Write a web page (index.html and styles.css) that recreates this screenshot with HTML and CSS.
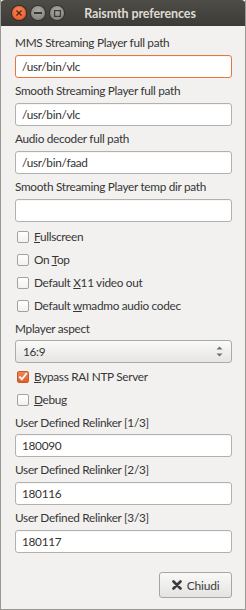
FILE: index.html
```html
<!DOCTYPE html>
<html lang="en">
<head>
  <meta charset="UTF-8">
  <title>Raismth preferences</title>
  <link rel="stylesheet" href="styles.css">
</head>
<body>
  <div class="window">
    <!-- Title bar -->
    <div class="titlebar">
      <div class="wm-buttons">
        <span class="wm-btn wm-close">
          <svg width="6" height="6" viewBox="0 0 6 6"><path d="M0.5 0.5 L5.5 5.5 M5.5 0.5 L0.5 5.5" stroke="#5a1e0a" stroke-width="1.3"/></svg>
        </span>
        <span class="wm-btn wm-min">
          <svg width="8" height="2" viewBox="0 0 8 2"><rect width="8" height="2" fill="#3a3935"/></svg>
        </span>
        <span class="wm-btn wm-max">
          <svg width="7" height="7" viewBox="0 0 7 7"><rect x="0.6" y="0.6" width="5.8" height="5.8" fill="none" stroke="#3a3935" stroke-width="1.2"/></svg>
        </span>
      </div>
      <div class="title">Raismth preferences</div>
    </div>

    <div class="content">
      <label class="field-label first">MMS Streaming Player full path</label>
      <div class="entry focused">/usr/bin/vlc</div>

      <label class="field-label">Smooth Streaming Player full path</label>
      <div class="entry">/usr/bin/vlc</div>

      <label class="field-label">Audio decoder full path</label>
      <div class="entry">/usr/bin/faad</div>

      <label class="field-label">Smooth Streaming Player temp dir path</label>
      <div class="entry"></div>

      <div class="checks">
        <div class="check"><span class="box"></span><span><u>F</u>ullscreen</span></div>
        <div class="check"><span class="box"></span><span>On <u>T</u>op</span></div>
        <div class="check"><span class="box"></span><span>Default <u>X</u>11 video out</span></div>
        <div class="check"><span class="box"></span><span>Default <u>w</u>madmo audio codec</span></div>
      </div>

      <label class="field-label short">Mplayer aspect</label>
      <div class="combo">
        <span>16:9</span>
        <svg class="spin" width="7" height="11" viewBox="0 0 7 11">
          <path d="M3.5 0.5 L6.5 3.5 L0.5 3.5 Z" fill="#6e6e6e"/>
          <path d="M3.5 10.5 L6.5 7.5 L0.5 7.5 Z" fill="#6e6e6e"/>
        </svg>
      </div>

      <div class="checks second">
        <div class="check"><span class="box checked">
          <svg width="10" height="9" viewBox="0 0 10 9"><path d="M1.2 4.5 L3.9 7.3 L8.8 1" fill="none" stroke="#fff4ec" stroke-width="2"/></svg>
        </span><span><u>B</u>ypass RAI NTP Server</span></div>
        <div class="check"><span class="box"></span><span><u>D</u>ebug</span></div>
      </div>

      <label class="field-label short">User Defined Relinker [1/3]</label>
      <div class="entry">180090</div>

      <label class="field-label">User Defined Relinker [2/3]</label>
      <div class="entry">180116</div>

      <label class="field-label">User Defined Relinker [3/3]</label>
      <div class="entry">180117</div>

      <div class="actions">
        <button class="btn">
          <svg width="10" height="10" viewBox="0 0 10 10"><path d="M1.5 1.5 L8.5 8.5 M8.5 1.5 L1.5 8.5" stroke="#3a3a3a" stroke-width="2.6" stroke-linecap="round"/></svg>
          Chiudi
        </button>
      </div>
    </div>
  </div>
</body>
</html>
```

FILE: styles.css
```css
body {
  margin: 0;
  background-color: #f2f1f0;
  font-family: Lato, "Noto Sans", sans-serif;
  font-size: 11.8px;
  letter-spacing: -0.3px;
  color: #363636;
}

.window {
  width: 246px;
  height: 610px;
  box-sizing: border-box;
  border-left: 1px solid #9a9895;
  border-right: 1px solid #9a9895;
  border-bottom: 1px solid #9a9895;
  background-color: #f2f1f0;
  overflow: hidden;
}

/* Title bar */
.titlebar {
  height: 26px;
  margin: 0 -1px;
  display: flex;
  align-items: center;
  background: linear-gradient(#4d4c47, #3c3b37);
  border-radius: 5px 5px 0 0;
}

.wm-buttons {
  display: flex;
  gap: 5px;
  padding-left: 12px;
}

.wm-btn {
  width: 14px;
  height: 14px;
  border-radius: 50%;
  display: flex;
  align-items: center;
  justify-content: center;
}

.wm-close {
  background: radial-gradient(circle at 50% 35%, #f7875a, #e3501e);
  box-shadow: 0 0 0 1px #3a2a22;
}

.wm-min,
.wm-max {
  background: radial-gradient(circle at 50% 35%, #a9a8a3, #7b7a75);
  box-shadow: 0 0 0 1px #35342f;
}

.title {
  flex: 1;
  text-align: center;
  padding-right: 30px;
  font-weight: bold;
  font-size: 12.5px;
  letter-spacing: -0.1px;
  color: #dfdbd2;
}

/* Form */
.content {
  padding: 0 13px 0 14px;
}

.field-label {
  display: block;
  height: 25px;
  line-height: 25px;
  white-space: nowrap;
}

.field-label.first {
  margin-top: 4px;
}

.field-label.short {
  height: 23px;
  line-height: 23px;
}

.entry {
  height: 23px;
  box-sizing: border-box;
  border: 1px solid #b4b1ac;
  border-radius: 3px;
  background-color: #ffffff;
  padding: 0 6px;
  line-height: 21px;
  color: #333333;
  box-shadow: inset 0 1px 1px rgba(0,0,0,0.04);
}

.entry.focused {
  border-color: #e5773b;
}

.checks {
  padding-top: 3px;
}

.checks.second {
  padding-top: 2px;
}

.check {
  height: 23px;
  display: flex;
  align-items: center;
  gap: 5px;
  padding-left: 2px;
}

.box {
  width: 10px;
  height: 10px;
  border: 1px solid #a5a29c;
  border-radius: 2px;
  background: linear-gradient(#ffffff, #f2f1ef);
  display: flex;
  align-items: center;
  justify-content: center;
}

.box.checked {
  background: linear-gradient(#ec8456, #de5f2c);
  border-color: #c9592b;
}

.combo {
  height: 23px;
  box-sizing: border-box;
  border: 1px solid #aeaba6;
  border-radius: 3px;
  background: linear-gradient(#fafaf9, #e6e5e3);
  display: flex;
  align-items: center;
  justify-content: space-between;
  padding: 0 8px 0 7px;
}

.actions {
  display: flex;
  justify-content: flex-end;
  padding-top: 19px;
}

.btn {
  width: 73px;
  height: 26px;
  border: 1px solid #a9a6a1;
  border-radius: 3px;
  background: linear-gradient(#f9f9f8, #e4e3e1);
  font-family: inherit;
  font-size: 12px;
  letter-spacing: -0.2px;
  color: #3c3c3c;
  display: flex;
  align-items: center;
  justify-content: center;
  gap: 5px;
  padding: 0;
}
```
